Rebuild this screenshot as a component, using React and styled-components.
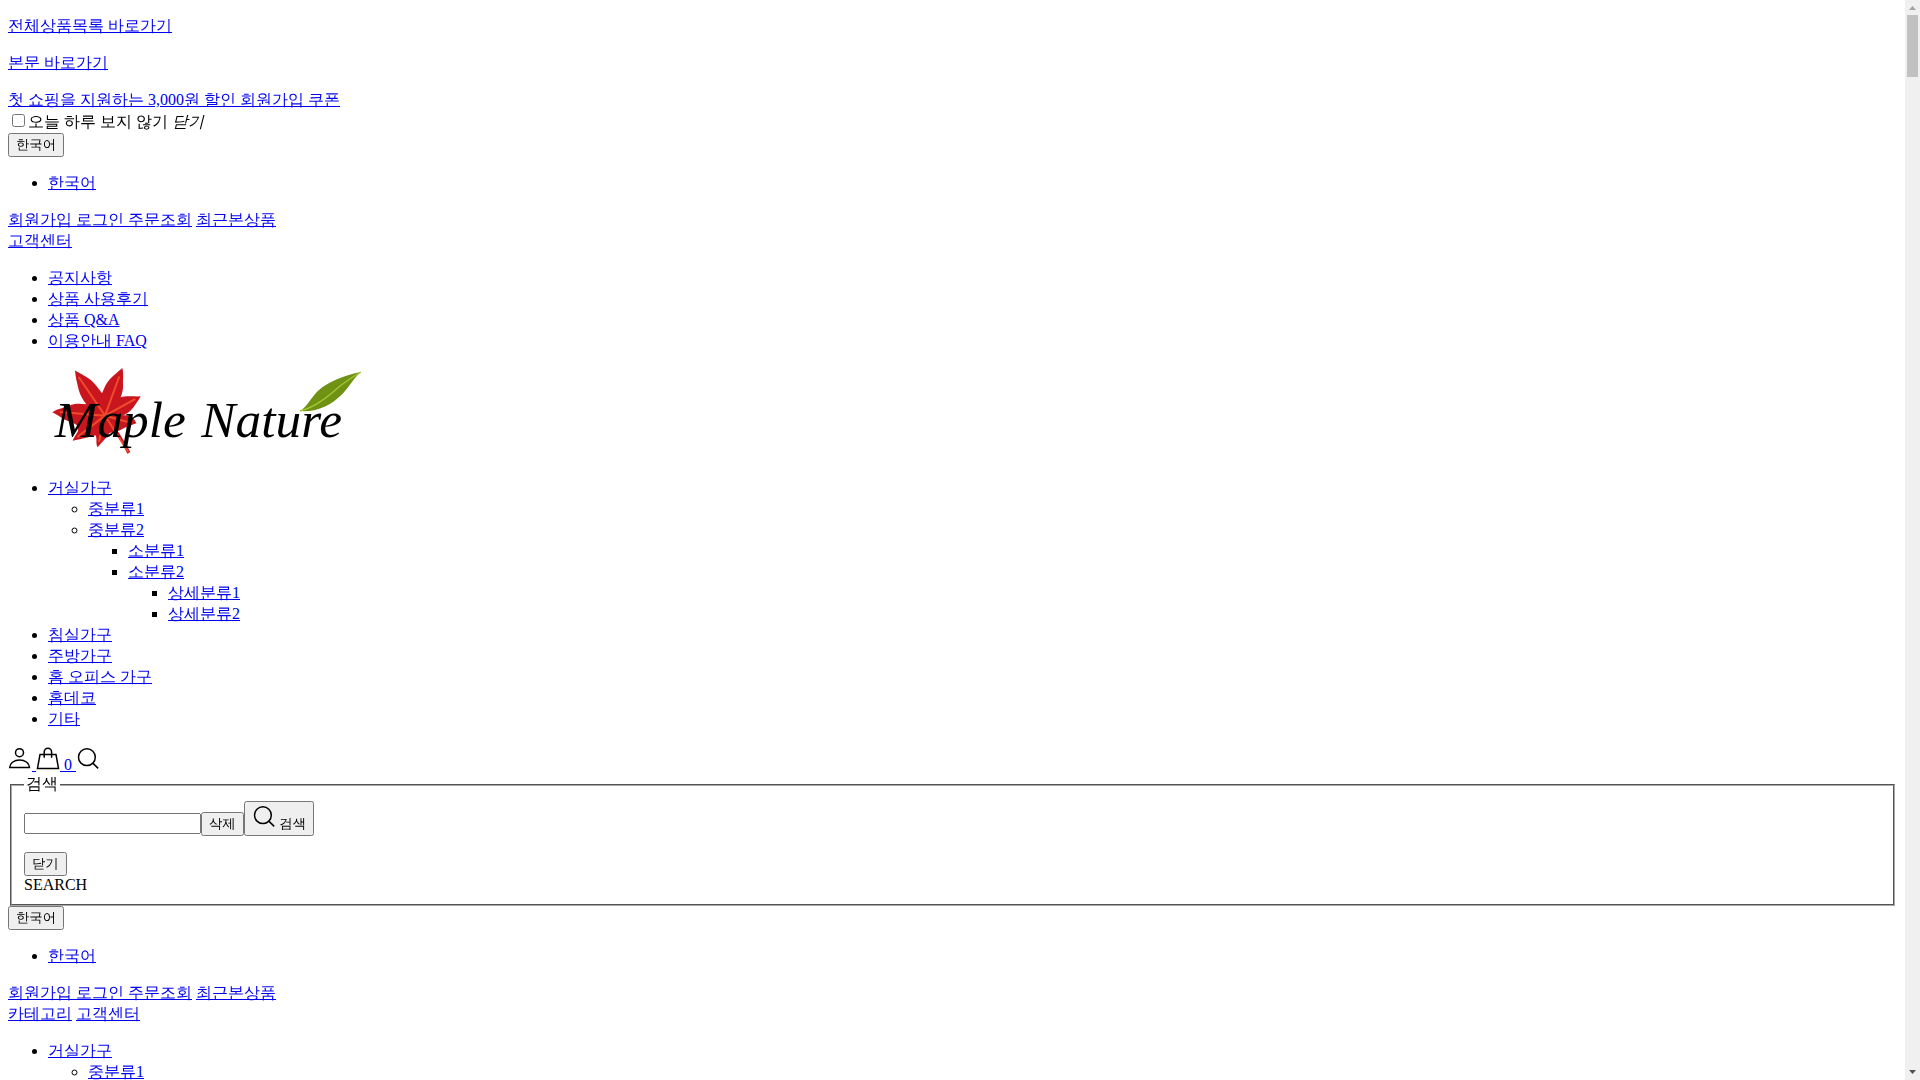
import styled, { createGlobalStyle } from 'styled-components';

const GlobalStyle = createGlobalStyle`
    body {
        margin: 0;
        background: #fff;
        color: #000;
        font-family: 'Liberation Serif', 'WenQuanYi Zen Hei', serif;
        font-size: 16px;
    }
`;

const Page = styled.div`
    display: flex;
    height: 100vh;
    overflow: hidden;
`;

const Content = styled.main`
    flex: 1;
    min-width: 0;
    padding: 0 8px;
`;

const Link = styled.a`
    color: #0000ee;
    text-decoration: underline;
`;

const Skip = styled.p`
    margin: 16px 0;
`;

const Button = styled.button`
    font-family: 'Liberation Sans', 'WenQuanYi Zen Hei', sans-serif;
`;

const SearchBox = styled.fieldset`
    border: 2px groove #a8a8a8;
`;

const SearchInput = styled.input`
    font-family: 'Liberation Sans', 'WenQuanYi Zen Hei', sans-serif;
    box-sizing: border-box;
    width: 177px;
    height: 21px;
`;

const SearchRow = styled.div`
    margin-bottom: 16px;
`;

const Logo = styled.figure`
    margin: 16px 40px;

    svg {
        display: block;
    }

    text {
        font-family: 'Liberation Serif', serif;
        font-size: 154px;
        font-style: italic;
    }
`;

const Icon = styled.svg`
    width: 24px;
    height: 24px;
    fill: none;
    stroke: #000;
    stroke-width: 1.5;
`;

const Scrollbar = styled.div`
    flex: none;
    display: flex;
    flex-direction: column;
    width: 15px;
    background: #f0f0f0;
`;

const Arrow = styled.svg`
    width: 15px;
    height: 15px;
    fill: ${({ $active }) => $active ? '#505050' : '#a3a3a3'};
`;

const Thumb = styled.div`
    height: 62px;
    margin: 0 2px auto;
    background: #c1c1c1;
`;

const boards = [
    { name: '공지사항' },
    { name: '상품 사용후기' },
    { name: '상품 Q&A' },
    { name: '이용안내 FAQ' },
];

const categories = [
    {
        name: '거실가구',
        children: [
            { name: '중분류1' },
            {
                name: '중분류2',
                children: [
                    { name: '소분류1' },
                    {
                        name: '소분류2',
                        children: [{ name: '상세분류1' }, { name: '상세분류2' }],
                    },
                ],
            },
        ],
    },
    { name: '침실가구' },
    { name: '주방가구' },
    { name: '홈 오피스 가구' },
    { name: '홈데코' },
    { name: '기타' },
];

const sideCategories = [
    { name: '거실가구', children: [{ name: '중분류1' }] },
];

const Menu = ({ items }) => (
    <ul>
        {items.map(({ name, children }) => (
            <li key={name}>
                <Link href="#">{name}</Link>
                {children && <Menu items={children} />}
            </li>
        ))}
    </ul>
);

const Language = () => (
    <>
        <div><Button type="button">한국어</Button></div>
        <Menu items={[{ name: '한국어' }]} />
    </>
);

const MemberLinks = () => (
    <div>
        <Link href="#">회원가입 </Link>
        <Link href="#">로그인 </Link>
        <Link href="#">주문조회</Link>{' '}
        <Link href="#">최근본상품</Link>
    </div>
);

const UserIcon = () => (
    <Icon viewBox="0 0 24 24">
        <circle cx="11.5" cy="6.7" r="4" />
        <path d="M1.7 21.6C2 16.9 6.3 13.9 11.6 13.9S21.2 16.9 21.5 21.6Z" />
    </Icon>
);

const BagIcon = () => (
    <Icon viewBox="0 0 24 24">
        <path d="M4 8.500H20L22.500 22.400H1.500Z" />
        <path d="M8.200 11.700V5.900a3.700 3.700 0 0 1 7.400 0V11.700" />
    </Icon>
);

const SearchIcon = () => (
    <Icon viewBox="0 0 24 24">
        <circle cx="10.900" cy="11.200" r="8.400" />
        <path d="M16.800 17.100L22.200 22.400" />
    </Icon>
);

const MapleLogo = () => (
    <svg width="320" height="94" viewBox="24 39 960 282" role="img" aria-label="Maple Nature">
        <path
            d="M222 224L245 262L262 296L271 291L258 268L236 232Z"
            fill="#c9151e"
        />
        <path
            d="M105 46C122 58 144 66 158 80C170 92 178 104 186 115C194 98 198 84 210 72C222 60 236 48 247 39C252 56 248 74 249 90C250 104 246 116 242 127C258 121 282 125 302 124C294 138 286 150 276 162C268 172 258 177 247 182C264 178 282 186 289 205C272 212 258 216 243 224C228 232 218 230 208 234C198 252 184 262 173 277C166 266 172 252 167 241C145 246 120 254 98 257C102 246 108 240 114 228C116 216 112 210 104 206L70 192C58 184 48 178 37 172C54 160 76 158 92 150C108 144 126 146 139 148C130 136 120 120 116 104C112 86 106 66 105 46Z"
            fill="#c9151e"
        />
        <path
            d="M195 182L116 66M195 182L238 64M195 182L286 132M195 182L60 171M195 182L112 246M195 182L177 260M195 182L274 204M195 182L265 291"
            fill="none"
            stroke="#ef4a2c"
            strokeWidth="6"
        />
        <path
            d="M780 168C804 154 812 128 836 106C862 82 914 60 963 51C942 68 932 90 908 116C876 148 834 172 780 168Z"
            fill="#6f9215"
        />
        <path
            d="M780 168C826 156 862 126 894 98C916 80 938 66 963 51"
            fill="none"
            stroke="#a3c832"
            strokeWidth="4"
        />
        <text x="44" y="247">Maple</text>
        <text x="484" y="247">Nature</text>
    </svg>
);

const SearchForm = () => (
    <form onSubmit={(e) => e.preventDefault()}>
        <SearchBox>
            <legend>검색</legend>
            <SearchRow>
                <SearchInput type="text" aria-label="검색" />
                <Button type="reset">삭제</Button>
                <Button type="submit"><SearchIcon /> 검색</Button>
            </SearchRow>
            <div><Button type="button">닫기</Button></div>
            <div>SEARCH</div>
        </SearchBox>
    </form>
);

const App = () => (
    <>
        <GlobalStyle />
        <Page>
            <Content>
                <Skip><Link href="#category">전체상품목록 바로가기</Link></Skip>
                <Skip><Link href="#contents">본문 바로가기</Link></Skip>

                {/* Top banner */}
                <div><Link href="#">첫 쇼핑을 지원하는 3,000원 할인 회원가입 쿠폰</Link></div>
                <div>
                    <input type="checkbox" id="today" />
                    <label htmlFor="today">오늘 하루 보지 않기</label> <em>닫기</em>
                </div>

                <Language />
                <MemberLinks />
                <div><Link href="#">고객센터</Link></div>
                <Menu items={boards} />

                <Logo><MapleLogo /></Logo>

                <Menu items={categories} />
                <div>
                    <Link href="#" aria-label="마이페이지"><UserIcon /> </Link>
                    <Link href="#"><BagIcon /> 0 </Link>
                    <Link href="#" aria-label="검색"><SearchIcon /></Link>
                </div>
                <SearchForm />

                {/* Side menu */}
                <Language />
                <MemberLinks />
                <div><Link href="#">카테고리</Link> <Link href="#">고객센터</Link></div>
                <Menu items={sideCategories} />
            </Content>

            <Scrollbar aria-hidden="true">
                <Arrow viewBox="0 0 15 15"><path d="M4 10L7.5 6L11 10Z" /></Arrow>
                <Thumb />
                <Arrow viewBox="0 0 15 15" $active><path d="M4 5H11L7.5 9Z" /></Arrow>
            </Scrollbar>
        </Page>
    </>
);

export default App;
